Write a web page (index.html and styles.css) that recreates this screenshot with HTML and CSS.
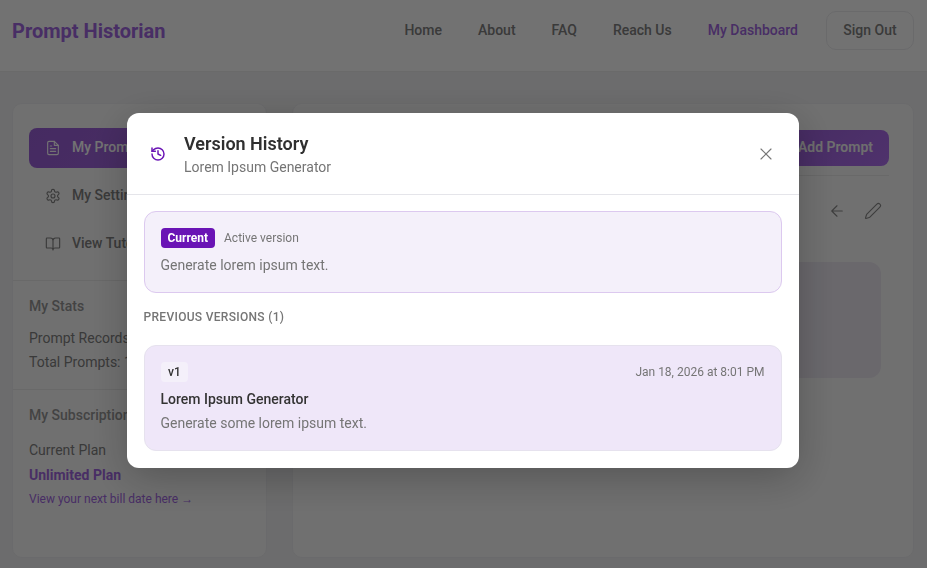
FILE: index.html
```html
<!DOCTYPE html>
<html lang="en">
<head>
<meta charset="utf-8">
<title>Prompt Historian</title>
<link rel="stylesheet" href="styles.css">
</head>
<body>
<header class="topbar">
  <div class="logo">Prompt Historian</div>
  <nav class="topnav">
    <a>Home</a><a>About</a><a>FAQ</a><a>Reach Us</a><a class="active">My Dashboard</a>
    <button class="signout">Sign Out</button>
  </nav>
</header>
<div class="layout">
  <aside class="sidebar">
    <div class="side-nav">
      <div class="side-item selected">
        <svg class="ico" viewBox="0 0 24 24"><path d="M14 2H6a2 2 0 0 0-2 2v16a2 2 0 0 0 2 2h12a2 2 0 0 0 2-2V8z"/><path d="M14 2v6h6M16 13H8M16 17H8M10 9H8"/></svg>
        <span>My Prompts</span>
      </div>
      <div class="side-item">
        <svg class="ico" viewBox="0 0 24 24"><circle cx="12" cy="12" r="3"/><path d="M12.22 2h-.44a2 2 0 0 0-2 2v.18a2 2 0 0 1-1 1.73l-.43.25a2 2 0 0 1-2 0l-.15-.08a2 2 0 0 0-2.73.73l-.22.38a2 2 0 0 0 .73 2.73l.15.1a2 2 0 0 1 1 1.72v.51a2 2 0 0 1-1 1.74l-.15.09a2 2 0 0 0-.73 2.73l.22.38a2 2 0 0 0 2.73.73l.15-.08a2 2 0 0 1 2 0l.43.25a2 2 0 0 1 1 1.73V20a2 2 0 0 0 2 2h.44a2 2 0 0 0 2-2v-.18a2 2 0 0 1 1-1.73l.43-.25a2 2 0 0 1 2 0l.15.08a2 2 0 0 0 2.73-.73l.22-.39a2 2 0 0 0-.73-2.73l-.15-.08a2 2 0 0 1-1-1.74v-.5a2 2 0 0 1 1-1.74l.15-.09a2 2 0 0 0 .73-2.73l-.22-.38a2 2 0 0 0-2.73-.73l-.15.08a2 2 0 0 1-2 0l-.43-.25a2 2 0 0 1-1-1.73V4a2 2 0 0 0-2-2z"/></svg>
        <span>My Settings</span>
      </div>
      <div class="side-item">
        <svg class="ico" viewBox="0 0 24 24"><path d="M12 7v14M3 18a1 1 0 0 1-1-1V4a1 1 0 0 1 1-1h5a4 4 0 0 1 4 4 4 4 0 0 1 4-4h5a1 1 0 0 1 1 1v13a1 1 0 0 1-1 1h-6a3 3 0 0 0-3 3 3 3 0 0 0-3-3z"/></svg>
        <span>View Tutorials</span>
      </div>
    </div>
    <section class="side-section stats">
      <h3>My Stats</h3>
      <p>Prompt Records: 1</p>
      <p>Total Prompts: 1</p>
    </section>
    <section class="side-section subs">
      <h3>My Subscription</h3>
      <p>Current Plan</p>
      <p class="plan">Unlimited Plan</p>
      <a class="bill">View your next bill date here <span class="arrow">→</span></a>
    </section>
  </aside>
  <main class="content">
    <div class="content-head">
      <h2>My Prompts</h2>
      <button class="add">+ Add Prompt</button>
    </div>
    <div class="tools">
      <svg class="tool" viewBox="0 0 24 24"><path d="M19 12H5M12 19l-7-7 7-7"/></svg>
      <svg class="tool" viewBox="0 0 24 24"><path d="M21.17 6.81a2.82 2.82 0 0 0-3.99-3.99L3.84 16.17a2 2 0 0 0-.5.83l-1.32 4.35a.5.5 0 0 0 .62.62l4.35-1.32a2 2 0 0 0 .83-.5z"/></svg>
    </div>
    <div class="prompt-card"></div>
  </main>
</div>

<div class="backdrop">
  <div class="modal">
    <div class="modal-head">
      <svg class="hist" viewBox="0 0 24 24"><path d="M3 12a9 9 0 1 0 9-9 9.75 9.75 0 0 0-6.74 2.74L3 8"/><path d="M3 3v5h5M12 7v5l4 2"/></svg>
      <div class="titles">
        <h2>Version History</h2>
        <p>Lorem Ipsum Generator</p>
      </div>
      <svg class="close" viewBox="0 0 24 24"><path d="M18 6 6 18M6 6l12 12"/></svg>
    </div>
    <div class="modal-body">
      <div class="current">
        <div class="row">
          <span class="badge">Current</span>
          <span class="meta">Active version</span>
        </div>
        <p class="desc">Generate lorem ipsum text.</p>
      </div>
      <div class="prev-label">Previous Versions (1)</div>
      <div class="version">
        <div class="row between">
          <span class="chip">v1</span>
          <span class="meta">Jan 18, 2026 at 8:01 PM</span>
        </div>
        <div class="v-title">Lorem Ipsum Generator</div>
        <p class="desc">Generate some lorem ipsum text.</p>
      </div>
    </div>
  </div>
</div>
</body>
</html>
```
FILE: styles.css
```css
* { box-sizing: border-box; }
html, body { margin: 0; height: 100%; overflow: hidden; }
body {
  font-family: Roboto, "Liberation Sans", sans-serif;
  background: #f0f0f1;
  color: #333;
  font-size: 14px;
}
h2, h3, p { margin: 0; }
.ico {
  width: 16px; height: 16px; flex: none;
  fill: none; stroke: currentColor; stroke-width: 1.7;
  stroke-linecap: round; stroke-linejoin: round;
}
.tool {
  width: 18px; height: 18px; flex: none;
  fill: none; stroke: currentColor; stroke-width: 1.5;
  stroke-linecap: round; stroke-linejoin: round;
}
.topbar {
  height: 72px;
  padding: 11px 13px 0 12px;
  display: flex;
  justify-content: space-between;
  align-items: flex-start;
  background: #fdfdfd;
  border-bottom: 1px solid #ebebeb;
}
.logo { font-size: 20px; font-weight: 700; color: #a066e0; line-height: 40px; }
.topnav { display: flex; align-items: center; height: 39px; font-weight: 500; color: #808080; }
.topnav a { margin-right: 36px; padding-bottom: 2px; }
.topnav a.active { color: #a066e0; margin-right: 28px; }
.signout {
  width: 88px; height: 39px; padding: 0 0 2px;
  font: 500 14px Roboto, sans-serif; color: #808080;
  background: #fdfdfd; border: 1px solid #ebebee; border-radius: 10px;
}
.layout {
  display: grid;
  grid-template-columns: 255px 622px;
  gap: 25px;
  padding: 31px 13px 10px 12px;
  height: 496px;
}
.sidebar, .content {
  background: #f9f9f9;
  border: 1px solid #ececef;
  border-radius: 10px;
}
.side-nav { padding: 24px 16px 16px; display: flex; flex-direction: column; gap: 8px; height: 176px; }
.side-item {
  height: 40px;
  display: flex; align-items: center; gap: 11px;
  padding: 0 16px;
  border-radius: 8px;
  font-weight: 500;
  color: #808080;
}
.side-item span { padding-bottom: 2px; }
.side-item.selected { background: linear-gradient(135deg, #9a5fd8, #a468e0); color: #fff; }
.side-section { border-top: 1px solid #e8e8e8; padding: 16px 16px 0; }
.side-section h3 { font-size: 14px; font-weight: 500; color: #969696; line-height: 18px; }
.stats { height: 109px; }
.stats h3 { margin-bottom: 11px; }
.stats p { line-height: 24px; color: #808080; }
.subs h3 { margin-bottom: 16px; }
.subs p { line-height: 20px; color: #808080; margin-bottom: 5px; }
.subs .plan { color: #a066e0; font-weight: 700; margin-bottom: 6px; }
.bill { display: block; font-size: 12px; color: #a066e0; line-height: 16px; }
.arrow { font-family: "Liberation Sans", sans-serif; }
.content { padding: 26px 24px 0; }
.content-head {
  height: 46px;
  display: flex; justify-content: space-between; align-items: flex-start;
  border-bottom: 1px solid #e8e8e8;
}
.content-head h2 { font-size: 18px; font-weight: 600; line-height: 36px; }
.add {
  height: 36px; padding: 0 16px 2px;
  font: 600 14px Roboto, sans-serif; color: #f4f4f4;
  background: linear-gradient(135deg, #9a5fd8, #b070f0);
  border: 0; border-radius: 8px;
}
.tools {
  display: flex; justify-content: flex-end; gap: 18px;
  padding: 26px 0 0; height: 86px; color: #888; margin-right: 7px;
}
.prompt-card {
  height: 116px; margin-right: 8px;
  background: #ebe7f0;
  border-radius: 12px;
}
.backdrop {
  position: fixed; inset: 0;
  background: rgba(0, 0, 0, .55);
}
.modal {
  position: absolute; left: 127px; top: 113px;
  width: 672px; height: 355px;
  background: #fff;
  border-radius: 12px;
  box-shadow: 0 10px 40px rgba(0, 0, 0, .25);
}
.modal-head {
  height: 82px;
  display: flex; align-items: center;
  padding: 0 23px;
  border-bottom: 1px solid #e5e5ea;
}
.hist {
  width: 16px; height: 16px; flex: none; margin-right: 18px;
  fill: none; stroke: #6a14b5; stroke-width: 2.2;
  stroke-linecap: round; stroke-linejoin: round;
}
.titles { flex: 1; }
.titles h2 { font-size: 18px; font-weight: 600; line-height: 26px; color: #2f2f2f; }
.titles p { font-size: 14px; line-height: 20px; color: #757575; }
.close { width: 20px; height: 20px; flex: none; fill: none; stroke: #777; stroke-width: 1.4; stroke-linecap: round; }
.modal-body { padding: 16px 17.5px 0 16.5px; }
.row { display: flex; align-items: center; gap: 9px; }
.between { justify-content: space-between; }
.current {
  height: 82px; padding: 16px;
  background: #f4f0fa;
  border: 1px solid #dcc9ef;
  border-radius: 12px;
}
.badge {
  height: 20px; padding: 0 7px;
  display: inline-flex; align-items: center;
  font-size: 12px; font-weight: 700; color: #fff;
  background: #6a14b5; border-radius: 4px;
}
.meta { font-size: 12px; color: #757575; }
.desc { font-size: 14px; line-height: 20px; color: #757575; }
.current .desc { margin-top: 7px; }
.prev-label {
  margin: 16px 0 20px;
  font-size: 12px; font-weight: 500; line-height: 16px;
  letter-spacing: .3px; text-transform: uppercase; color: #757575;
}
.version {
  height: 106px; padding: 16px;
  background: #efe7f9;
  border: 1px solid #e6e2ee;
  border-radius: 12px;
}
.chip {
  height: 20px; padding: 0 7.5px;
  display: inline-flex; align-items: center;
  font-size: 12px; font-weight: 500; color: #333;
  background: #f4f0fa; border-radius: 4px;
}
.v-title { font-size: 14px; font-weight: 500; line-height: 20px; color: #333; margin-top: 7px; }
.version .desc { margin-top: 4px; }
```
